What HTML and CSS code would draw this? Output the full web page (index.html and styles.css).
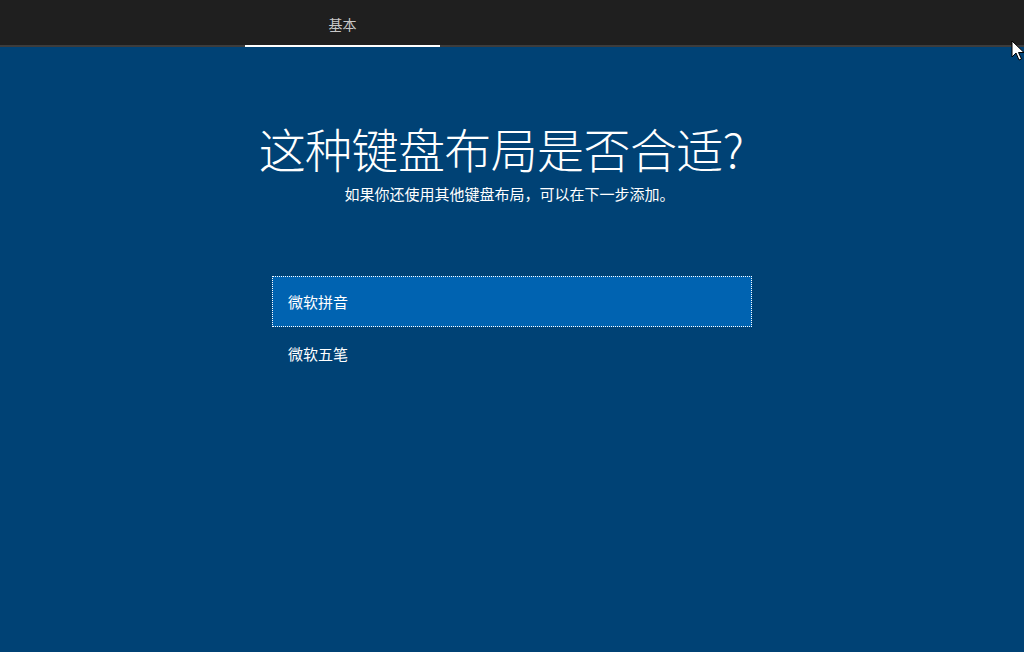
FILE: index.html
```html
<!DOCTYPE html>
<html lang="zh-CN">
<head>
    <meta charset="UTF-8">
    <meta name="viewport" content="width=device-width, initial-scale=1.0">
    <title>键盘布局</title>
    <link rel="stylesheet" href="styles.css">
</head>
<body>
    <header class="topbar">
        <nav class="tabs">
            <a class="tab active" href="#basic">基本</a>
        </nav>
    </header>

    <main class="page">
        <h1 class="title">这种键盘布局是否合适?</h1>
        <p class="subtitle">如果你还使用其他键盘布局，可以在下一步添加。</p>

        <ul class="layouts">
            <li class="layout selected">微软拼音</li>
            <li class="layout">微软五笔</li>
        </ul>
    </main>

    <!-- mouse pointer -->
    <svg class="cursor" width="14" height="22" viewBox="0 0 14 22">
        <path d="M1 1 L1 17 L5 13 L8 20 L10.5 19 L7.5 12.5 L13 12.5 Z" fill="#fff" stroke="#000" stroke-width="1"/>
    </svg>
</body>
</html>
```

FILE: styles.css
```css
html, body {
    margin: 0;
    padding: 0;
    height: 100%;
}
body {
    background-color: #004275;
    color: #fff;
    font-family: "Noto Sans CJK SC", "Noto Sans", sans-serif;
    overflow: hidden;
    position: relative;
}
.topbar {
    background-color: #1f1f1f;
    height: 45px;
    border-bottom: 2px solid #3c3c3c;
}
.tabs {
    display: flex;
    padding-left: 245px;
    height: 100%;
}
.tab {
    width: 195px;
    color: #c8c8c8;
    text-decoration: none;
    font-size: 14px;
    text-align: center;
    line-height: 49px;
    height: 47px;
    box-sizing: border-box;
}
.tab.active {
    border-bottom: 2px solid #fff;
}
.page {
    display: flex;
    flex-direction: column;
    align-items: center;
}
.title {
    margin: 73px 0 0 -22px;
    font-size: 47px;
    font-weight: 300;
    letter-spacing: -0.6px;
    line-height: 56px;
}
.subtitle {
    margin: 8px 0 0 -5px;
    font-size: 15px;
    line-height: 20px;
}
.layouts {
    list-style: none;
    margin: 72px 0 0;
    padding: 0;
    width: 480px;
}
.layout {
    height: 51px;
    line-height: 51px;
    padding-left: 16px;
    font-size: 15px;
    box-sizing: border-box;
    margin-bottom: 1px;
}
.layout.selected {
    background-color: #0063b1;
    border: 1px dotted #fff;
    padding-left: 15px;
    line-height: 49px;
}
.cursor {
    position: absolute;
    top: 40px;
    left: 1011px;
}
```
